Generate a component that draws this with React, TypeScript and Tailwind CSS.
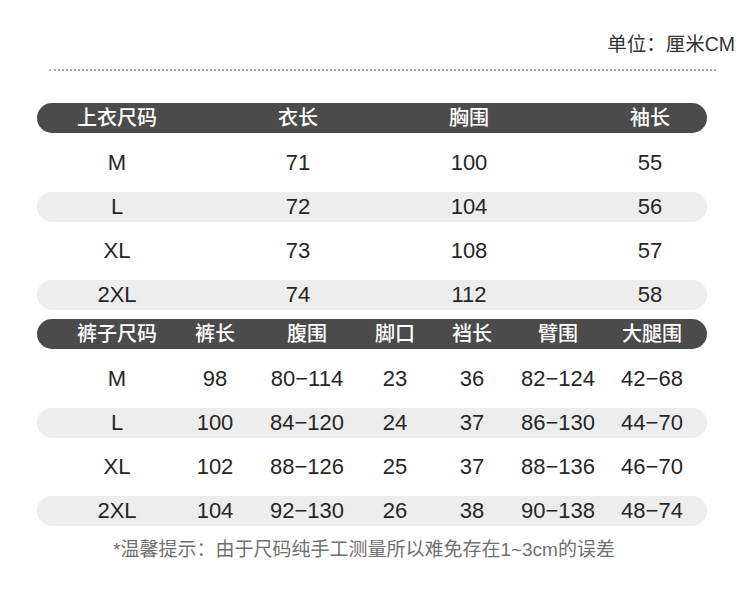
const cjk = '"Liberation Sans", "Noto Sans CJK SC", sans-serif';

// column slots (fixed width + left margin) so centres line up with the picture
const topCols = [
  'ml-[35px] w-[90px]',
  'ml-[91px] w-[90px]',
  'ml-[81px] w-[90px]',
  'ml-[91px] w-[90px]',
];

const pantCols = [
  'ml-[30px] w-[100px]',
  'ml-[10px] w-[76px]',
  'ml-[16px] w-[76px]',
  'ml-[12px] w-[76px]',
  'ml-[1px] w-[76px]',
  'ml-[10px] w-[76px]',
  'ml-[18px] w-[76px]',
];

const topHead = ['上衣尺码', '衣长', '胸围', '袖长'];
const topRows = [
  ['M', '71', '100', '55'],
  ['L', '72', '104', '56'],
  ['XL', '73', '108', '57'],
  ['2XL', '74', '112', '58'],
];

const pantHead = ['裤子尺码', '裤长', '腹围', '脚口', '裆长', '臂围', '大腿围'];
const pantRows = [
  ['M', '98', '80−114', '23', '36', '82−124', '42−68'],
  ['L', '100', '84−120', '24', '37', '86−130', '44−70'],
  ['XL', '102', '88−126', '25', '37', '88−136', '46−70'],
  ['2XL', '104', '92−130', '26', '38', '90−138', '48−74'],
];

function HeadBar({ cells, cols }: { cells: string[]; cols: string[] }) {
  return (
    <div className="flex h-[30px] items-center rounded-full bg-[#4b4b4b] text-[20px] font-medium text-white">
      {cells.map((c, i) => (
        <div key={i} className={`${cols[i]} flex shrink-0 justify-center whitespace-nowrap leading-[30px]`}>
          {c}
        </div>
      ))}
    </div>
  );
}

function Row({ cells, cols, shaded, first }: { cells: string[]; cols: string[]; shaded: boolean; first: boolean }) {
  return (
    <div
      className={`flex h-[30px] items-center rounded-full text-[22px] text-[#262626] ${first ? 'mt-[15px]' : 'mt-[14px]'} ${
        shaded ? 'bg-[#ededed]' : 'bg-white'
      }`}
    >
      {cells.map((c, i) => (
        <div key={i} className={`${cols[i]} flex shrink-0 justify-center whitespace-nowrap leading-[32px]`}>
          {c}
        </div>
      ))}
    </div>
  );
}

export default function App() {
  return (
    <div className="h-[596px] w-[750px] overflow-hidden bg-white" style={{ fontFamily: cjk }}>
      <div className="flex justify-end pr-[15px] pt-[33px] text-[19.5px] leading-[22px] text-[#333]">单位：厘米CM</div>

      <div className="ml-[49px] mt-[14px] w-[667px] border-t-2 border-dotted border-[#a6a6a6]" />

      <div className="ml-[37px] mt-[32px] w-[670px]">
        <HeadBar cells={topHead} cols={topCols} />
        {topRows.map((r, i) => (
          <Row key={i} cells={r} cols={topCols} shaded={i % 2 === 1} first={i === 0} />
        ))}

        <div className="mt-[9px]">
          <HeadBar cells={pantHead} cols={pantCols} />
        </div>
        {pantRows.map((r, i) => (
          <Row key={i} cells={r} cols={pantCols} shaded={i % 2 === 1} first={i === 0} />
        ))}
      </div>

      <div className="mt-[12px] pl-[113px] text-[19px] leading-[24px] text-[#707070]">
        *温馨提示：由于尺码纯手工测量所以难免存在1~3cm的误差
      </div>
    </div>
  );
}
